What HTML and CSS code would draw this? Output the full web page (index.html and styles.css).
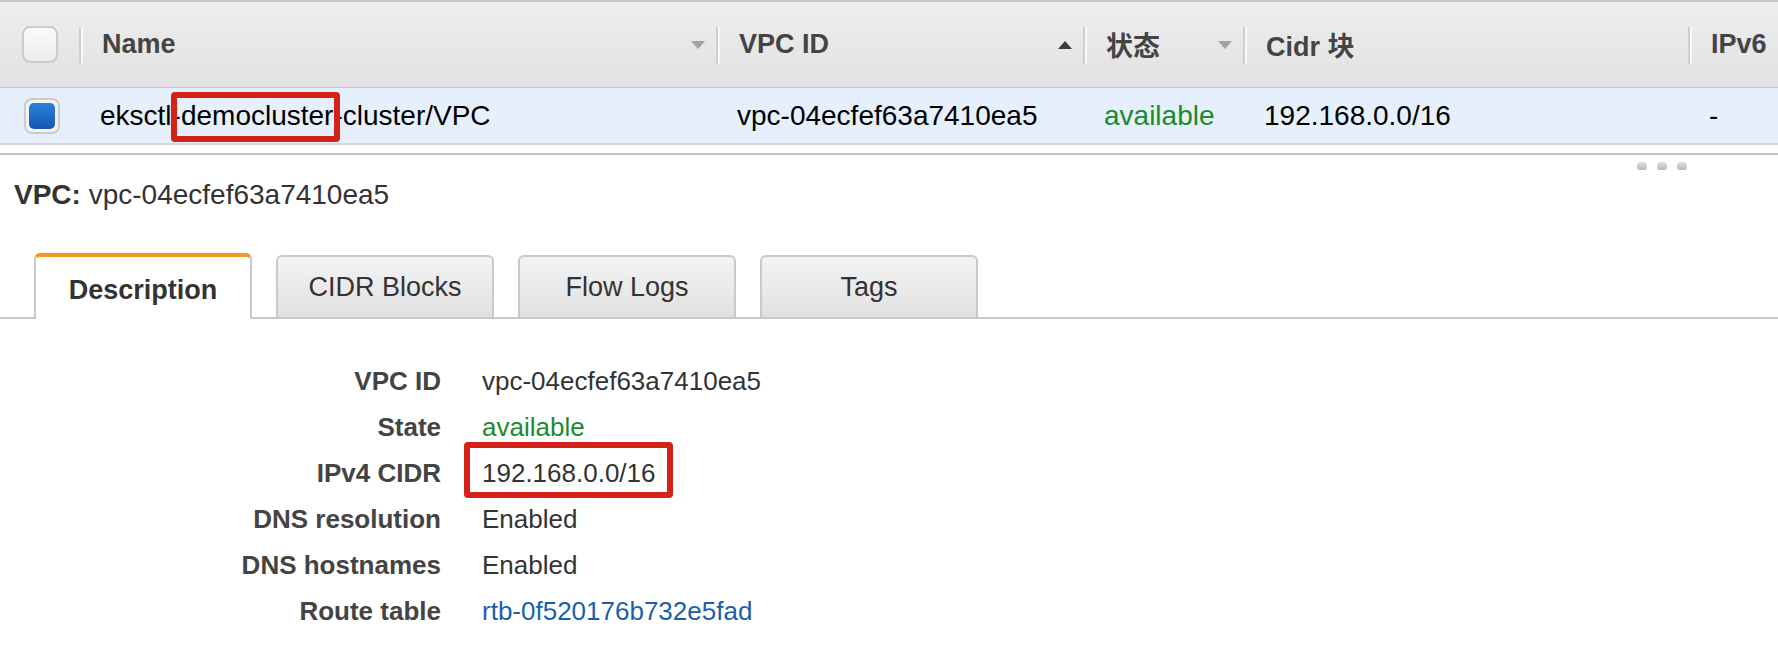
FILE: index.html
```html
<!DOCTYPE html>
<html lang="zh">
<head>
<meta charset="utf-8">
<title>VPC</title>
<link rel="stylesheet" href="styles.css">
</head>
<body>
<div class="grid">
  <div class="hd cb-col"><span class="cbox"></span></div>
  <div class="hd sep"><span>Name</span><i class="arr down"></i></div>
  <div class="hd sep"><span>VPC ID</span><i class="arr up"></i></div>
  <div class="hd sep"><span>状态</span><i class="arr down"></i></div>
  <div class="hd sep"><span>Cidr 块</span></div>
  <div class="hd sep"><span>IPv6</span></div>

  <div class="cell cb-col"><span class="cbox on"><span class="tick"></span></span></div>
  <div class="cell">eksctl-<span class="mark m1">democluster</span>-cluster/VPC</div>
  <div class="cell">vpc-04ecfef63a7410ea5</div>
  <div class="cell ok">available</div>
  <div class="cell">192.168.0.0/16</div>
  <div class="cell">-</div>
</div>

<div class="splitter">
  <span class="dot"></span><span class="dot"></span><span class="dot"></span>
</div>

<div class="title"><b>VPC:</b> vpc-04ecfef63a7410ea5</div>

<div class="tabs">
  <div class="tab active">Description</div>
  <div class="tab">CIDR Blocks</div>
  <div class="tab">Flow Logs</div>
  <div class="tab">Tags</div>
</div>

<div class="props">
  <div class="lbl">VPC ID</div><div class="val">vpc-04ecfef63a7410ea5</div>
  <div class="lbl">State</div><div class="val ok">available</div>
  <div class="lbl">IPv4 CIDR</div><div class="val"><span class="mark m2">192.168.0.0/16</span></div>
  <div class="lbl">DNS resolution</div><div class="val">Enabled</div>
  <div class="lbl">DNS hostnames</div><div class="val">Enabled</div>
  <div class="lbl">Route table</div><div class="val"><a class="link" href="#">rtb-0f520176b732e5fad</a></div>
</div>
</body>
</html>
```

FILE: styles.css
```css
html, body {
  margin: 0;
  padding: 0;
  background: #fff;
}
body {
  width: 1778px;
  height: 662px;
  overflow: hidden;
  font-family: "Liberation Sans", Arial, "Noto Sans CJK SC", sans-serif;
  color: #333;
}

.grid {
  display: grid;
  grid-template-columns: 80px 637px 367px 160px 445px 1fr;
  border-top: 2px solid #c6c6c6;
}

.hd {
  position: relative;
  height: 85px;
  box-sizing: border-box;
  background: linear-gradient(#eeeeee, #e1e1e1);
  border-bottom: 1px solid #c8c8c8;
  display: flex;
  align-items: center;
  justify-content: space-between;
  padding: 0 12px 0 22px;
  font-size: 27px;
  font-weight: bold;
  color: #444;
  height: 86px;
}
.hd.sep::before {
  content: "";
  position: absolute;
  left: -1px;
  top: 25px;
  height: 37px;
  width: 2px;
  background: #cfcfcf;
  box-shadow: 2px 0 0 #f8f8f8;
}
.cb-col {
  justify-content: center;
  padding: 0;
}

.arr {
  display: block;
  width: 0;
  height: 0;
  border-left: 7px solid transparent;
  border-right: 7px solid transparent;
}
.arr.down {
  border-top: 8px solid #a3a3a3;
}
.arr.up {
  border-bottom: 8px solid #3a3a3a;
}

.cbox {
  display: flex;
  align-items: center;
  justify-content: center;
  width: 36px;
  height: 37px;
  box-sizing: border-box;
  border: 2px solid #cbcbcb;
  border-radius: 8px;
  background: linear-gradient(#fbfbfb, #ececec);
}
.cbox.on {
  height: 36px;
  margin-left: 4px;
  background: #f3f3f3;
}
.tick {
  width: 26px;
  height: 26px;
  border-radius: 5px;
  background: linear-gradient(#2b7fdc, #1456b2);
}

.cell {
  height: 57px;
  box-sizing: border-box;
  background: #e5f0fc;
  border-bottom: 2px solid #d3d8de;
  display: flex;
  align-items: center;
  padding-left: 20px;
  font-size: 28px;
  color: #000;
  white-space: nowrap;
}
.cell.cb-col {
  padding: 0;
}
.ok {
  color: #1d8a2d !important;
}

.mark {
  position: relative;
}
.mark::after {
  content: "";
  position: absolute;
  border: 6px solid #d52219;
  border-radius: 4px;
}
.m1::after {
  left: -10px;
  right: -7px;
  top: -8px;
  bottom: -10px;
}
.m2::after {
  left: -18px;
  right: -17px;
  top: -16px;
  bottom: -10px;
}

.splitter {
  margin-top: 8px;
  border-top: 2px solid #c3c3c3;
  padding: 7px 91px 0 0;
  display: flex;
  justify-content: flex-end;
  gap: 10px;
}
.dot {
  width: 10px;
  height: 8px;
  border-radius: 4px 4px 3px 3px;
  background: linear-gradient(#e2e2e2, #b9b9b9);
}

.title {
  margin: 9px 0 0 14px;
  font-size: 28px;
  line-height: 32px;
  color: #333;
}

.tabs {
  margin-top: 42px;
  display: flex;
  align-items: flex-end;
  gap: 24px;
  padding-left: 34px;
  border-bottom: 2px solid #c9c9c9;
}
.tab {
  width: 218px;
  height: 62px;
  box-sizing: border-box;
  border: 2px solid #c9c9c9;
  border-bottom: 0;
  border-radius: 6px 6px 0 0;
  background: linear-gradient(#f4f4f4, #e0e0e0);
  display: flex;
  align-items: center;
  justify-content: center;
  font-size: 27px;
  color: #333;
}
.tab.active {
  height: 66px;
  margin-bottom: -2px;
  border-top: 4px solid #f29a1e;
  background: #fff;
  font-weight: bold;
  padding-top: 4px;
}

.props {
  margin-top: 39px;
  display: grid;
  grid-template-columns: 441px 1fr;
  column-gap: 41px;
  grid-auto-rows: 46px;
  font-size: 26px;
  line-height: 46px;
}
.lbl {
  text-align: right;
  font-weight: bold;
  color: #444;
}
.val {
  color: #333;
}
.link {
  color: #1c5fa8;
  text-decoration: none;
}
```
